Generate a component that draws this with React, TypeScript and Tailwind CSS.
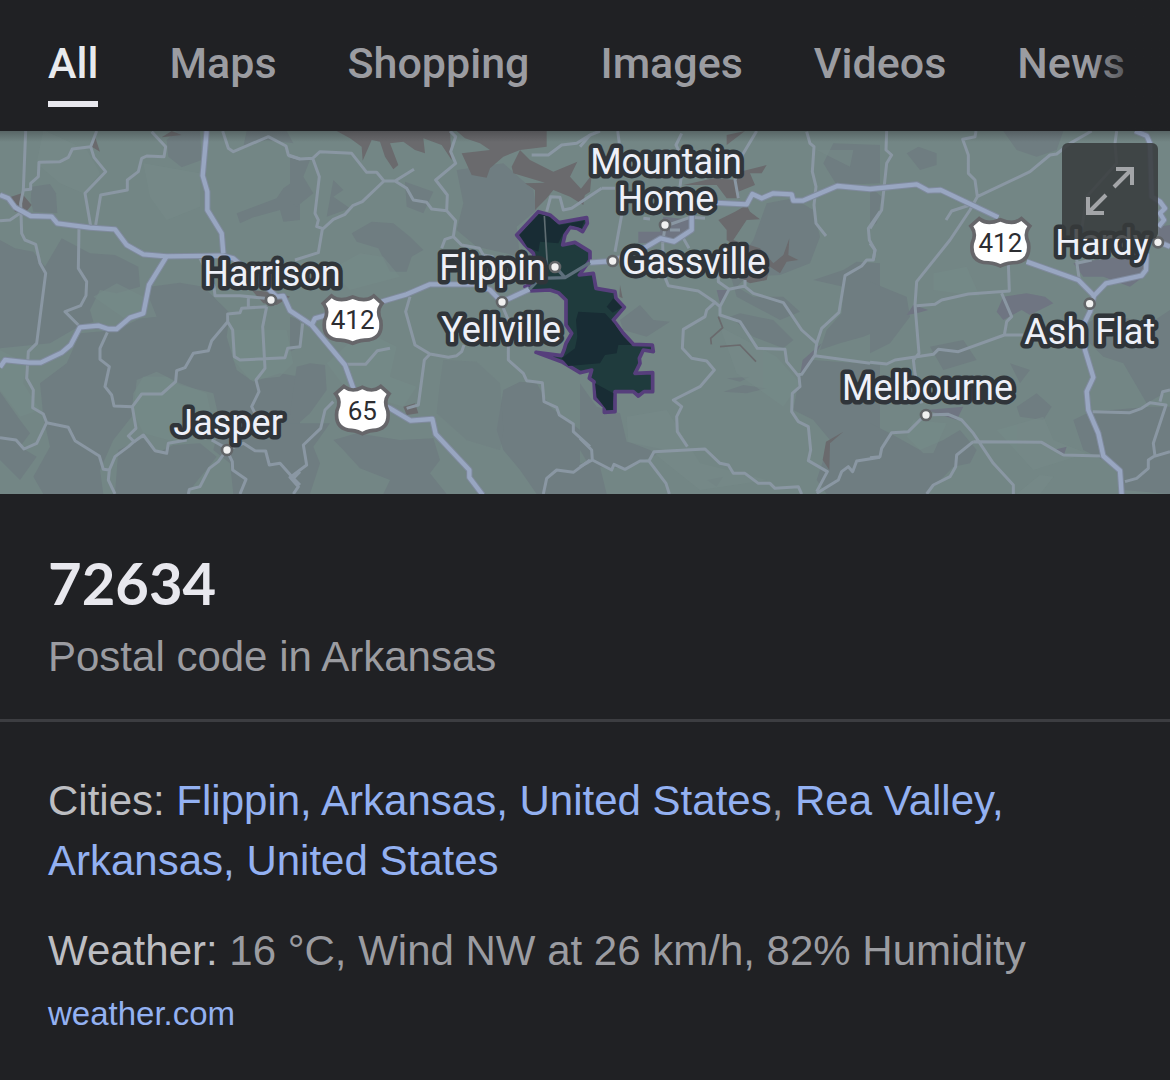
import React from "react";

const tabs = ["All", "Maps", "Shopping", "Images", "Videos", "News"];

type City = { name: string; x: number; y: number; dot: [number, number] };

const cities: City[] = [
  { name: "Harrison", x: 610, y: 467, dot: [813, 510] },
  { name: "Jasper", x: 520, y: 916, dot: [681, 960] },
  { name: "Flippin", x: 1318, y: 449, dot: [1665, 411] },
  { name: "Yellville", x: 1324, y: 635, dot: [1506, 516] },
  { name: "Gassville", x: 1866, y: 431, dot: [1838, 393] },
  { name: "Melbourne", x: 2526, y: 810, dot: [2778, 855] },
  { name: "Ash Flat", x: 3073, y: 641, dot: [3269, 521] },
  { name: "Hardy", x: 3166, y: 374, dot: [3474, 337] },
];

const labelClass =
  "fill-[#eef0f8] stroke-[#30353a] [font-family:Roboto,sans-serif] text-[108px] [paint-order:stroke] [stroke-linejoin:round] [stroke-width:27px]";

function Shield({ x, y, label, width }: { x: number; y: number; label: string; width: number }) {
  const w = width / 2;
  const d = `M${-w + 20},-62 Q${-w + 44},-44 0,-60 Q${w - 44},-44 ${w - 20},-62 L${w - 2},-46 Q${w - 18},-24 ${w - 4},6 Q${w + 2},50 ${w - 34},57 Q22,57 0,67 Q-22,57 ${-w + 34},57 Q${-w - 2},50 ${-w + 4},6 Q${-w + 18},-24 ${-w + 2},-46 Z`;
  return (
    <g transform={`translate(${x} ${y})`}>
      <path d={d} fill="#fff" stroke="#66666a" strokeWidth="22" />
      <path d={d} fill="#fff" />
      <text x="0" y="31" textAnchor="middle" className="fill-[#2c2d31] text-[78px] [font-family:Roboto,sans-serif]">
        {label}
      </text>
    </g>
  );
}

function RegionMap() {
  return (
    <svg viewBox="0 3 3510 1089" className="block h-auto w-full" role="img" aria-label="Map of postal code 72634">
      <defs>
        <linearGradient id="topShade" x1="0" y1="0" x2="0" y2="1">
          <stop offset="0" stopColor="#202124" stopOpacity="0.35" />
          <stop offset="1" stopColor="#202124" stopOpacity="0" />
        </linearGradient>
      </defs>
      <rect y="0" width="3510" height="1100" fill="#738685" />

      {/* woodland */}
      <g fill="#6f7d81">
        <path d="M0,330 L45,355 L100,365 L135,410 L185,325 L270,370 L345,375 L415,410 L420,470 L350,490 L300,480 L270,540 L280,575 L235,590 L150,640 L0,655 Z" />
        <path d="M450,470 L540,458 L610,470 L650,510 L690,550 L680,620 L710,720 L760,755 L840,730 L900,740 L900,1092 L700,1092 L690,1000 L640,960 L660,880 L640,790 L540,765 L500,740 L430,740 L400,790 L395,860 L340,930 L300,1020 L310,1092 L130,1092 L100,1040 L150,950 L130,860 L120,760 L200,700 L240,610 L350,600 L430,560 Z" />
        <path d="M0,785 L60,870 L90,910 L60,950 L110,980 L60,1050 L0,990 Z" />
        <path d="M95,170 L150,162 L168,190 L172,250 L100,245 L92,210 Z" />
        <path d="M500,30 L530,3 L600,3 L605,90 L545,112 L505,80 Z M710,250 L830,205 L850,175 L900,140 L900,270 L850,275 L840,240 L760,262 L720,280 Z M740,3 L860,3 L880,40 L800,30 L730,50 Z" />
        <path d="M355,960 L430,925 L470,970 L520,945 L600,940 L650,980 L560,1092 L345,1092 Z" />
        <g transform="translate(870)">
          <path d="M185,310 L245,275 L310,280 L360,320 L400,360 L365,380 L350,425 L300,425 L265,355 L200,335 Z" />
          <path d="M0,80 L60,90 L40,140 L70,190 L20,230 L0,215 Z M130,150 L160,180 L130,200 L180,235 L110,260 Z M345,155 L430,185 L400,250 L350,230 Z" />
          <path d="M0,560 L30,570 L30,650 L0,665 Z M20,710 L60,700 L105,705 L110,780 L60,850 L20,885 L0,850 Z" />
          <path d="M130,930 L200,910 L330,930 L430,925 L450,990 L420,1030 L470,1092 L280,1092 L300,1050 L210,1015 L160,960 Z M120,880 L70,950 L90,1000 L60,1092 L0,1092 L0,880 Z" />
          <path d="M500,120 L640,100 L730,180 L740,240 L680,290 L690,380 L560,350 L500,300 L520,220 Z" />
          <path d="M640,780 L690,755 L740,760 L780,830 L870,900 L870,1092 L740,1092 L690,1020 L640,960 L620,900 Z" />
        </g>
        <path d="M1330,690 L1430,695 L1500,760 L1510,900 L1500,960 L1400,930 L1310,850 L1320,760 Z" opacity="0.5" />
        <g transform="translate(1740)">
          <path d="M0,760 L50,830 L120,850 L140,935 L260,960 L140,1015 L30,1010 L0,960 Z M0,1000 L60,1010 L80,1092 L0,1092 Z" />
          <path d="M560,220 L640,205 L700,240 L720,320 L690,400 L600,435 L500,440 L470,470 L520,500 L610,500 L660,545 L600,570 L470,500 L450,430 L520,330 Z" />
          <path d="M120,570 L180,525 L220,570 L270,575 L200,620 L130,600 Z M450,560 L520,620 L610,655 L640,630 L580,570 L480,550 Z M760,40 L900,45 L900,160 L770,165 L730,100 Z" />
          <path d="M700,450 L790,420 L830,395 L900,400 L900,600 L850,620 L780,640 L720,660 L740,600 L785,550 L790,470 Z" />
          <path d="M660,730 L700,690 L900,705 L900,1092 L740,1092 L710,1050 L750,930 L700,870 L640,840 Z M430,785 L490,765 L560,775 L500,790 Z M440,745 L510,740 L480,755 Z M380,1050 L430,1040 L410,1070 Z" />
        </g>
        <g transform="translate(2610)">
          <path d="M0,455 L60,480 L110,500 L120,560 L60,640 L0,670 Z M110,70 L145,50 L200,70 L200,105 L150,120 Z M0,170 L35,200 L20,280 L0,290 Z" />
          <path d="M400,3 L580,3 L560,60 L500,80 L440,60 Z M620,600 L700,550 L840,580 L900,540 L900,780 L830,820 L760,700 L700,680 Z" />
          <path d="M0,880 L60,910 L150,960 L220,930 L270,900 L320,960 L300,1000 L250,1010 L170,1092 L0,1092 Z M610,870 L660,845 L840,830 L900,830 L900,1092 L760,1080 L740,1010 L640,960 Z" />
          <path d="M440,830 L500,790 L545,830 L520,870 L450,860 Z M420,700 L480,720 L450,760 Z M180,650 L280,630 L320,690 L220,720 Z" />
        </g>
      </g>

      {/* open land */}
      <g fill="#768b89" opacity="0.6">
        <path d="M130,0 L260,60 L300,130 L250,190 L180,160 L110,100 Z M430,100 L600,130 L600,230 L500,270 L450,200 Z M0,660 L80,700 L70,760 L120,840 L60,860 L0,780 Z" />
        <path d="M410,750 L470,725 L540,760 L620,790 L640,880 L540,940 L430,910 L400,850 Z M690,600 L860,600 L880,700 L840,740 L750,750 L700,690 Z M280,500 L350,460 L450,510 L470,560 L380,570 Z" />
        <path d="M990,420 L1080,370 L1150,380 L1200,440 L1050,480 Z M980,700 L1090,600 L1190,650 L1170,740 L1250,770 L1210,830 L1040,780 Z" />
        <path d="M1880,860 L2000,840 L2100,1000 L2300,1050 L2100,1080 L1950,960 L1885,935 Z M2160,590 L2330,680 L2400,760 L2350,830 L2210,730 Z M2450,60 L2560,60 L2550,110 Z" />
        <path d="M2740,870 L2840,880 L2800,970 L2770,970 L2720,920 Z M2800,430 L2900,410 L2940,500 L2800,480 Z M2990,900 L3130,860 L3160,930 L3260,970 L3100,1020 Z M3050,1092 L3120,1035 L3160,1040 L3120,1092 Z" />
      </g>

      {/* rocky ground */}
      <g fill="#6a6a6d">
        <path d="M485,22 L515,3 L545,15 Z M285,20 L300,65 L275,50 Z M20,205 L65,190 L95,225 L75,250 L45,245 Z M755,480 L840,490 L870,500 L830,525 L790,520 Z" />
        <g transform="translate(870)">
          <path d="M140,3 L480,3 L485,90 L455,45 L400,25 L405,70 L375,60 L340,35 L300,40 L325,105 L310,118 L285,80 L270,35 L245,30 L218,92 L215,50 L180,25 Z" />
          <path d="M500,3 L770,3 L770,50 L690,60 L720,90 L790,125 L862,95 L840,140 L885,190 L880,225 L840,200 L790,180 L770,205 L735,240 L735,180 L705,160 L765,158 L670,130 L665,110 L690,60 L640,80 L600,115 L590,143 L545,135 L515,70 L600,60 L570,40 L525,25 Z" />
          <path d="M340,830 L375,820 L385,850 L350,855 Z" />
        </g>
        <g transform="translate(1740)">
          <path d="M0,180 L35,135 L30,185 L0,205 Z M440,15 L495,3 L440,45 Z M310,165 L400,145 L470,150 L480,125 L560,105 L545,130 L510,130 L525,165 L475,185 L480,205 L440,205 L410,165 Z" />
          <path d="M415,270 L465,245 L500,225 L510,245 L540,268 L500,270 L480,300 L460,330 L540,355 L580,400 L610,375 L628,325 L625,375 L655,390 L620,395 L600,430 L570,410 L560,450 L510,460 L490,450 L530,420 L470,350 L440,330 L440,300 Z" />
          <path d="M120,465 L128,505 L118,500 Z M738,935 L790,905 L750,940 L748,1020 L728,990 Z" />
        </g>
      </g>
      <path
        d="M2155,560 L2168,593 L2132,625 L2134,643 M2160,650 L2220,645 L2268,695"
        fill="none"
        stroke="#6a6a6d"
        strokeWidth="5"
      />

      {/* towns */}
      <g fill="#6f7582">
        <path d="M1915,305 L1980,305 L1990,260 L2080,270 L2070,310 L2010,335 L1915,340 Z M2150,480 L2185,480 L2160,520 Z M2408,690 L2465,640 L2425,710 L2400,735 Z" />
        <path d="M3080,490 L3135,500 L3160,520 L3090,555 L3065,540 L3010,570 L2990,545 L3010,500 Z M3220,400 L3430,370 L3430,440 L3390,470 L3310,440 L3250,440 Z M3475,290 L3510,285 L3510,350 L3475,345 Z M2720,555 L2740,525 L2785,540 L2750,550 Z M2780,840 L2890,830 L2870,870 Z M3160,960 L3200,950 L3190,980 Z" />
      </g>

      {/* local roads */}
      <g fill="none" stroke="#8a97a3" strokeWidth="9" strokeLinejoin="round">
        <path d="M77,3 L70,180 L62,220 L65,310 L75,330 L107,343 L120,400 L137,430 L110,640 L85,665 L80,745 L100,780 L98,833 L130,852 L140,878 L110,940 L72,957 L48,930 L0,923 M140,878 L205,892 L225,932 L298,978 L310,1018 L328,1020 L345,980 L385,950 L402,935 L385,918 L408,895 L397,830 L342,828 L335,795 L315,770 L328,710 L300,688 L300,655 L322,607 M328,1020 L325,1050 L345,1092" />
        <path d="M70,180 L92,178 L92,160 L115,140 L117,97 L180,95 L205,82 L217,57 L272,50 L290,3 M272,50 L282,82 L317,125 L255,190 L272,288 M287,285 L302,195 L382,180 L382,150 L415,125 L425,85 L440,78 L492,80 L497,50 L455,5 M237,295 L235,415 L260,455 L258,497 L242,527 L195,545 L235,585 M0,272 L30,270 L60,250" />
        <path d="M668,3 L685,55 L700,65 L805,20 L858,48 L865,75 L900,87 M397,830 L425,792 L485,792 L527,755 L530,722 L555,713 L580,670 L625,662 L635,632 L683,575 L683,552 L720,548 L725,535 L800,530 M600,385 L642,470 L645,497 L720,497 L795,505 M745,500 V530 M683,575 L698,600 L703,680 L720,690 L855,683 L863,655 L900,650 L908,580 M800,530 L788,590 L795,715 L768,750 L777,785 L755,830 L765,850" />
        <path d="M402,935 L430,915 L465,962 L500,970 L505,940 L560,930 M635,930 L680,955 M680,960 L730,940 L765,962 L797,963 L808,1005 L840,1000 L880,1045 L900,1065 M880,1045 L900,1025 M680,960 L655,995 L628,1015 L600,1070 L568,1078 L565,1092 M680,960 L697,995 L698,1020 L738,1048 L720,1092" />
        <g transform="translate(870)">
          <path d="M-5,77 L30,87 L68,85 L90,65 L185,70 L230,127 L260,127 L282,153 L315,153 L372,118 M68,85 L88,140 L75,250 L85,270 L80,290 L97,295 M282,153 L217,215 L188,227 L165,253 L130,268 L97,298 L85,368 L15,390 M315,153 L350,175 L370,210 L410,217 L425,237 L470,242 L497,272 L490,320 L465,328 L455,355 M480,3 L497,20 L482,65 L497,100 L437,150 L472,195 L470,242 M490,320 L515,345 L568,355 L580,375 L610,380" />
          <path d="M360,500 L347,545 L375,645 L420,672 L475,682 L500,677 L515,665 L522,645 M420,672 L403,690 L385,825 L350,835 M165,703 L227,703 L262,662 L300,655 M130,815 L105,840 L92,895 L40,945 L50,1005 L0,1042 L25,1070 L10,1092 M638,530 L655,570 L655,690 L700,730 L710,752 L757,758 L762,815 L800,832 L808,855 L850,882 L850,905 L900,950 M900,990 L850,1027 L800,1020 L770,1045 L760,1092 M725,75 L775,75 L815,45 L860,40 L900,15 M770,245 L782,200 L810,202 L820,240 L845,235 L900,198 L935,175" />
        </g>
        <g transform="translate(1740)">
          <path d="M0,50 L30,15 L60,3 M105,365 L125,255 M118,40 L113,3 M65,175 L105,175 M305,10 L288,45 L305,80 M305,130 L300,170 M530,3 L487,75 L465,150 L475,205 M680,5 L690,40 L702,50 L697,125 L708,170 L702,225 L708,280 L738,318 M900,245 L865,295 L868,330 L885,360 L880,390 L860,390 L845,408 L795,437 L777,547 L725,595 L710,640 L705,675 L665,733 L650,735 M705,677 L870,700" />
          <path d="M415,430 L415,455 L447,478 L495,468 L495,450 M447,478 L420,530 L420,555 L480,575 L532,655 L615,658 L620,695 L657,740 L660,770 L637,790 L635,845 L655,875 L685,890 L692,960 L685,992 L742,1025 L710,1085 M248,340 L250,430 L265,467 L355,483 L405,517 L420,530 M405,517 L380,540 L375,560 L310,598 L307,655 L335,685 L380,693 L403,720 L360,770 L280,810 L305,830 L290,860 L292,905 L322,950 M495,470 L520,490 L610,518 L665,600 L710,640" />
          <path d="M0,925 L35,960 L37,990 L95,1020 L102,1003 L135,1018 L180,993 L207,993 L222,965 L375,957 L420,1000 L445,1005 L460,1030 L495,1030 L535,1060 L570,1060 L585,1075 L655,1070 L665,1092 M0,1010 L37,990 M207,993 L258,1060 L268,1092 M710,1090 L775,1050 L785,1025 L805,1010 L818,1025 L830,993 L900,982 M310,325 L327,355 M190,265 L210,267 M265,285 L330,262 L375,265 M270,300 L300,300 M255,290 L248,340" />
        </g>
        <g transform="translate(2610)">
          <path d="M50,3 L48,60 L65,75 L50,100 L35,240 L0,295 M0,340 L15,360 L10,388 M318,3 L315,20 L278,28 L295,75 L295,130 L315,150 L322,200 L300,240 L240,330 L140,455 L135,525 L147,670 L130,690 L135,730 L155,820 M322,200 L480,125 L540,75 L560,72 L600,40 L665,3 M228,270 L245,243 L300,225 M740,3 L735,40 L740,100 L650,200 L620,395 M415,400 L418,483 L295,492 L215,510 L195,523 L140,527 M395,490 L425,560 L410,575 L403,615 L460,615 M403,615 L265,665 L205,658 L190,673 L75,690 L50,702 L0,697 M620,395 L628,450 M620,400 L665,390" />
          <path d="M165,855 L235,853 L275,870 L310,910 L370,1000 L430,1065 L430,1092 M165,855 L115,905 L65,908 L35,955 L30,980 L0,983 M310,935 L515,937 L580,975 L695,978 M310,935 L260,975 L257,1010 L240,1040 L190,1065 L170,1092 M668,845 L780,848 L815,835 L840,818 L888,825 L850,940 L855,978 M870,815 L878,785 L900,780 M900,965 L850,980 L835,990 L835,1015 L800,1045 L765,1055" />
        </g>
      </g>

      {/* selected postal area */}
      <g transform="translate(1470 180)">
        <path
          d="M145,65 L180,75 L207,98 L290,83 L292,100 L278,125 L262,115 L240,112 L225,135 L218,165 L255,157 L300,185 L300,210 L268,255 L310,250 L318,295 L375,305 L378,325 L403,352 L370,390 L400,430 L430,463 L487,465 L490,485 L460,480 L448,505 L450,520 L435,550 L488,548 L488,605 L462,605 L445,618 L430,605 L375,605 L375,665 L343,667 L343,650 L315,625 L312,575 L298,565 L305,540 L270,548 L215,515 L138,487 L215,497 L222,480 L228,460 L245,430 L228,405 L228,330 L205,308 L180,300 L118,303 L105,290 L150,270 L130,190 L105,165 L80,135 Z"
          fill="#1f3b3d"
          stroke="#563f7c"
          strokeWidth="11"
          strokeLinejoin="round"
        />
        <path
          d="M147,72 L180,82 L207,106 L283,92 L275,115 L240,105 L220,130 L205,160 L150,155 L145,185 L112,172 L88,135 Z M265,365 L345,370 L372,400 L400,440 L425,465 L385,465 L380,490 L345,495 L330,520 L235,528 L215,505 L255,475 L262,440 L258,390 Z M315,580 L370,610 L368,660 L350,660 L320,622 Z M370,325 L396,352 L368,368 L350,350 Z"
          fill="#182c34"
        />
        <path d="M163,78 L172,225" fill="none" stroke="#5f6d72" strokeWidth="5" />
      </g>

      {/* highways */}
      {[
        { color: "#7f8a9d", width: 19 },
        { color: "#98a6c1", width: 13 },
      ].map((line) => (
        <g key={line.color} fill="none" stroke={line.color} strokeWidth={line.width} strokeLinejoin="round">
          <path d="M0,195 L25,205 L45,232 L92,258 L155,260 L172,280 L270,293 L345,298 L380,345 L430,373 L500,379 L668,377 L700,385 L815,485 L830,500 L850,498 L870,542 L935,585 L1035,705 L1060,775 L1090,800 L1170,835 L1232,872 L1297,867 L1307,912 L1408,1020 L1408,1042 L1448,1095" />
          <path d="M620,3 L608,137 L622,185 L622,240 L665,310 L670,370 M500,379 L447,465 L430,550 L390,563 L350,597 L325,597 L295,587 L240,592 L212,645 L185,668 L122,698 L88,698 L15,690 L0,712 M935,585 L945,565 L980,555" />
          <path d="M1145,515 L1220,493 L1290,463 L1430,463 L1470,480 L1505,516 L1588,478 M1770,398 L1838,393 L1940,350 L1982,325 L2022,335 L2075,300 L2075,215 L2240,223 L2257,192 L2285,205 L2320,190 L2375,193 L2380,212 L2408,212 L2512,168 L2610,177 L2750,163 L2785,182 L2822,180 L2995,262" />
          <path d="M3080,395 L3235,450 L3282,497 L3270,545 L3253,580 L3255,660 L3280,742 L3260,785 L3265,840 L3295,910 L3310,978 L3360,1022 L3365,1095 M3282,497 L3318,460 L3425,437 L3438,420 L3440,370 M3405,3 L3440,17 L3450,40 L3455,200 L3480,215 L3495,235 L3480,250 L3492,270 L3476,290 M3475,335 L3510,350" />
        </g>
      ))}
      <path d="M1588,478 L1620,445 L1695,443 L1770,398 M1695,443 L1670,415" fill="none" stroke="#5d6f7c" strokeWidth="10" />

      <Shield x={1058} y={567} label="412" width={166} />
      <Shield x={1087} y={838} label="65" width={150} />
      <Shield x={3001} y={335} label="412" width={166} />

      {cities.map((c) => (
        <g key={c.name}>
          <circle cx={c.dot[0]} cy={c.dot[1]} r="15" fill="#f1f1f1" stroke="#626568" strokeWidth="8" />
          <text x={c.x} y={c.y} className={labelClass}>
            {c.name}
          </text>
        </g>
      ))}
      <circle cx="1995" cy="285" r="15" fill="#f1f1f1" stroke="#626568" strokeWidth="8" />
      <text textAnchor="middle" className={labelClass}>
        <tspan x="1998" y="133">Mountain</tspan>
        <tspan x="1998" y="242">Home</tspan>
      </text>
      <rect y="0" width="3510" height="36" fill="url(#topShade)" />
    </svg>
  );
}

export default function App() {
  return (
    <div className="min-h-screen bg-[#202124] [font-family:'Liberation_Sans',Arial,sans-serif] text-[42px] leading-[60px] text-[#9b9ca1]">
      <nav className="relative overflow-hidden px-12 pt-[33px] pb-6 text-[43px] font-medium [font-family:Roboto,sans-serif]">
        <ul className="flex gap-[71px]">
          {tabs.map((tab) => (
            <li key={tab}>
              <a
                href="#"
                aria-current={tab === "All" ? "page" : undefined}
                className={
                  tab === "All"
                    ? "block border-b-[6px] border-[#e8e8ee] pb-2 text-[#e8eaed]"
                    : "block border-b-[6px] border-transparent pb-2"
                }
              >
                {tab}
              </a>
            </li>
          ))}
        </ul>
        <div className="pointer-events-none absolute inset-y-0 right-0 w-20 bg-linear-to-l from-[#202124] from-20% to-transparent" />
      </nav>

      <div className="relative">
        <RegionMap />
        <button
          type="button"
          aria-label="Expand map"
          className="absolute top-3 right-3 flex size-24 items-center justify-center rounded-md bg-[#36393b]/85"
        >
          <svg viewBox="0 0 48 48" className="size-12" fill="none" stroke="#a3a5a8" strokeWidth="4">
            <path d="M28,20 L46,2 M30,2 H46 V18 M20,28 L2,46 M2,30 V46 H18" />
          </svg>
        </button>
      </div>

      <header className="border-b-[3px] border-[#3c3d41] px-12 pt-[53px] pb-8">
        <h1 className="text-[58px] leading-[72px] font-bold text-[#e8e8ee] [font-family:Lato,sans-serif]">72634</h1>
        <p className="mt-2">Postal code in Arkansas</p>
      </header>

      <main className="px-12 pt-[49px] pb-10">
        <p>
          <span className="text-[#bdbec2]">Cities: </span>
          <a href="#" className="text-[#93b1f2]">
            <span>Flippin, Arkansas, United States</span>
          </a>
          <span>, </span>
          <a href="#" className="text-[#93b1f2]">
            <span>Rea Valley,</span> <span>Arkansas, United States</span>
          </a>
        </p>
        <p className="mt-[30px]">
          <span className="text-[#bdbec2]">Weather: </span>
          <span>16 °C, Wind NW at 26 km/h, 82% Humidity</span>
        </p>
        <a href="#" className="mt-2 block text-[33px] leading-[50px] text-[#93b1f2]">
          weather.com
        </a>
      </main>
    </div>
  );
}
